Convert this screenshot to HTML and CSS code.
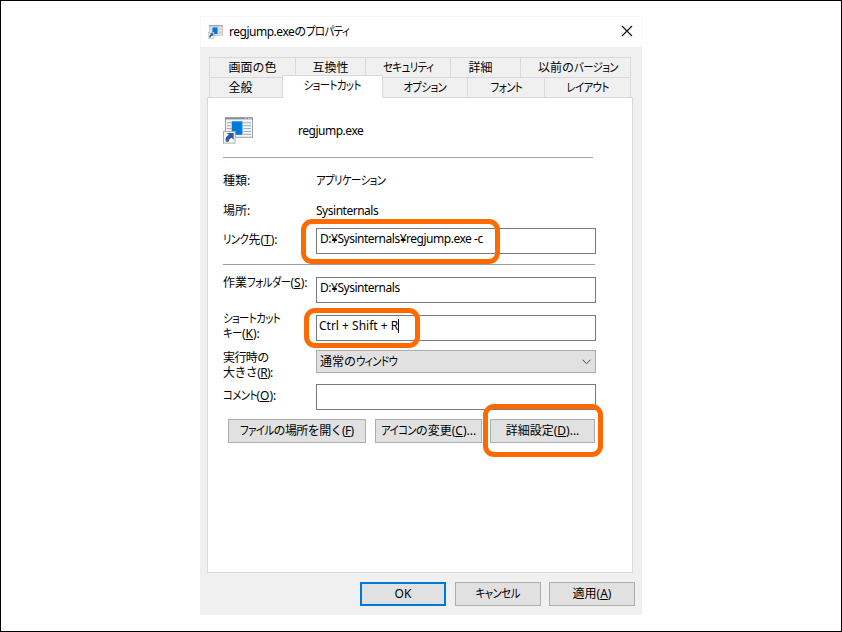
FILE: index.html
```html
<!DOCTYPE html>
<html lang="ja">
<head>
    <meta charset="UTF-8" />
    <title>regjump.exeのプロパティ</title>
    <link rel="stylesheet" href="styles.css">
</head>
<body>
    <svg width="0" height="0" class="defs">
        <symbol id="app" viewBox="0 0 31 29">
            <rect x="2.5" y="1.5" width="28" height="20" fill="#f5f5f5" stroke="#9b9da0"/>
            <path d="M2 2h29" stroke="#85888c" stroke-width="2"/>
            <path d="M23 2h1M26 2h1M28.500 2h1" stroke="#fff"/>
            <path d="M4 6.500h5M4 9.500h4M4 12.500h5M21 6.500h8M21 9.500h8M21 12.500h8M21 15.500h8M21 18.500h8" stroke="#a3a6aa"/>
            <rect x="9" y="5" width="11" height="14" fill="#0078d7"/>
            <path d="M20 5v14" stroke="#6db5ef"/>
            <rect x=".5" y="15.500" width="12" height="12" fill="#fafafa" stroke="#aaa"/>
            <path d="M4 17h7v7l-2-2c-2 1-3 2-3 4H3c-1-3 0-5 3-7z" fill="#2d5b9c"/>
        </symbol>
    </svg>
    <div class="dialog">
        <div class="titlebar">
            <svg class="icon-small"><use href="#app"/></svg>
            <span class="title"><span class="latin">regjump.exe</span>の<span class="kana">プロパティ</span></span>
            <svg class="close" viewBox="0 0 12 12"><path d="M1 1l10 10M11 1L1 11" stroke="#111" stroke-width="1.200"/></svg>
        </div>

        <div class="tabs">
            <div class="tab-row">
                <div class="tab w86">画面の色</div>
                <div class="tab w70">互換性</div>
                <div class="tab w85"><span class="kana mid">セキュリティ</span></div>
                <div class="tab w70 details">詳細</div>
                <div class="tab w110 previous">以前の<span class="kana k6">バージョン</span></div>
            </div>
            <div class="tab-row">
                <div class="tab w73 general">全般</div>
                <div class="tab active"><span class="kana mid">ショートカット</span></div>
                <div class="tab w85"><span class="kana mid">オプション</span></div>
                <div class="tab w77"><span class="kana mid">フォント</span></div>
                <div class="tab w86"><span class="kana mid">レイアウト</span></div>
            </div>
        </div>

        <div class="panel">
            <div class="header">
                <svg class="icon"><use href="#app"/></svg>
                <span class="latin">regjump.exe</span>
            </div>
            <div class="row info first">
                <div class="label">種類:</div>
                <div class="kana">アプリケーション</div>
            </div>
            <div class="row info">
                <div class="label">場所:</div>
                <div class="latin">Sysinternals</div>
            </div>
            <div class="row target">
                <div class="label"><span class="kana k3">リンク</span>先(<u>T</u>):</div>
                <div class="field latin">D:¥Sysinternals¥regjump.exe -c<div class="mark mark-target"></div></div>
            </div>
            <div class="line"></div>
            <div class="row folder">
                <div class="label">作業<span class="kana k5">フォルダー</span>(<u>S</u>):</div>
                <div class="field latin">D:¥Sysinternals</div>
            </div>
            <div class="row key">
                <div class="label"><span class="kana">ショートカット</span><br><span class="kana k2">キー</span>(<u>K</u>):</div>
                <div class="field">Ctrl + Shift + R<span class="caret"></span><div class="mark mark-key"></div></div>
            </div>
            <div class="row size">
                <div class="label tight">実行時の<br>大きさ(<u>R</u>):</div>
                <div class="field select">通常の<span class="kana">ウィンドウ</span>
                    <svg class="arrow" viewBox="0 0 9 6"><path d="M.5 .7l4 4 4-4" fill="none" stroke="#444"/></svg>
                </div>
            </div>
            <div class="row comment">
                <div class="label"><span class="kana k4">コメント</span>(<u>O</u>):</div>
                <div class="field"></div>
            </div>
            <div class="actions">
                <div class="btn open"><span class="tight"><span class="kana k4">ファイル</span>の場所を開く(<u>F</u>)</span></div>
                <div class="btn change"><span><span class="kana k4">アイコン</span>の変更(<u>C</u>)...</span></div>
                <div class="btn advanced"><span>詳細設定(<u>D</u>)...</span><div class="mark mark-advanced"></div></div>
            </div>
        </div>

        <div class="footer">
            <div class="btn ok">OK</div>
            <div class="btn"><span class="kana mid">キャンセル</span></div>
            <div class="btn"><span>適用(<u>A</u>)</span></div>
        </div>
    </div>
</body>
</html>
```
FILE: styles.css
```css
* { box-sizing: border-box; }
body {
    margin: 0;
    height: 632px;
    padding: 15px 0 0 199px;
    border: 1px solid #000;
    background: #fff;
    overflow: hidden;
    color: #000;
    font: 12px/15px "Noto Sans", "Noto Sans CJK JP", sans-serif;
    white-space: nowrap;
}
.defs { position: absolute; }
u { text-underline-offset: 1px; text-decoration-thickness: 1px; }

/* Narrow katakana; k2-k6 take back the space left by the squeeze */
.kana {
    display: inline-block;
    font-feature-settings: "palt";
    letter-spacing: -.6px;
    transform: scaleX(.86);
    transform-origin: left;
}
.kana.mid { transform-origin: center; }
.k2 { margin-right: -3px; }
.k3 { margin-right: -4px; }
.k4 { margin-right: -6px; }
.k5 { margin-right: -7px; }
.k6 { margin-right: -8px; }
.latin { letter-spacing: -.48px; }
.tight { letter-spacing: -.6px; }

.dialog { width: 442px; height: 599px; background: #f0f0f0; }
.titlebar {
    display: flex;
    align-items: center;
    height: 31px;
    padding: 0 8px 2px 7px;
    border: 1px solid #f8f8f8;
    border-bottom: 0;
    background: #fff;
}
.icon-small { width: 15px; height: 14px; margin: 1px 6px 0 0; }
.close { width: 12px; height: 12px; margin-left: auto; }

/* Tabs */
.tabs { padding: 10px 11px 0 9px; }
.tab-row { display: flex; height: 20px; border-left: 1px solid #d9d9d9; }
.tab {
    height: 20px;
    border: 1px solid #d9d9d9;
    border-width: 1px 1px 0 0;
    text-align: center;
    line-height: 20px;
}
.w70 { width: 70px; }
.w73 { width: 73px; }
.w77 { width: 77px; }
.w85 { width: 85px; }
.w86 { width: 86px; }
.w110 { width: 110px; }
.details { padding-right: 10px; }
.previous { padding-left: 4px; }
.general { padding-right: 11px; }
.tab.active {
    position: relative;
    z-index: 1;
    width: 101px;
    height: 23px;
    margin: -2px 0 0 -1px;
    border-left-width: 1px;
    background: #fff;
}

/* Page */
.panel {
    width: 426px;
    height: 476px;
    margin-left: 7px;
    padding-left: 15px;
    border: 1px solid #d9d9d9;
    background: #fff;
}
.header {
    display: flex;
    align-items: center;
    width: 370px;
    height: 60px;
    padding-top: 5px;
    border-bottom: 1px solid #a0a0a0;
}
.icon { width: 30px; height: 29px; margin: 1px 45px 0 0; }
.line { width: 372px; margin-top: 10px; border-top: 1px solid #a0a0a0; }
.row { display: flex; width: 373px; height: 26px; }
.label { width: 93px; flex: none; }
.row.info { height: 20px; margin-top: 10px; line-height: 21px; }
.row.first { margin-top: 12px; }
.target { margin-top: 8px !important; }
.target .label { margin-top: 4px; }
.folder, .key { margin-top: 12px; }
.folder .label { margin-top: -2px; }
.key .label { margin-top: -4px; }
.row.size { height: 23px; margin-top: 9px; }
.comment { margin-top: 11px; }
.comment .label { margin-top: 4px; }
.field {
    position: relative;
    width: 280px;
    height: 100%;
    padding: 2px 3px 0;
    border: 1px solid #7a7a7a;
    background: #fff;
}
.key .field { padding-left: 2px; }
.caret { display: inline-block; width: 1px; height: 14px; background: #000; vertical-align: -3px; }
.field.select { padding-top: 3px; border-color: #adadad; background: #e1e1e1; }
.arrow { position: absolute; right: 4px; top: 8px; width: 9px; height: 6px; }

.actions { display: flex; margin: 9px 0 0 5px; }
.btn {
    position: relative;
    display: flex;
    align-items: center;
    justify-content: center;
    width: 86px;
    height: 24px;
    padding-bottom: 1px;
    border: 1px solid #adadad;
    background: #e1e1e1;
}
.open { width: 138px; margin-right: 9px; }
.change { width: 107px; margin-right: 8px; }
.advanced { width: 105px; }
.footer { display: flex; justify-content: flex-end; gap: 8px; padding: 9px 7px 0 0; }
.ok { margin-right: 1px; border: 2px solid #0078d7; }

/* Highlights */
.mark { position: absolute; z-index: 2; border: 5px solid #ff6a00; border-radius: 11px; }
.mark-target { left: -16px; top: -10px; width: 199px; height: 45px; }
.mark-key { left: -13px; top: -8px; width: 116px; height: 40px; }
.mark-advanced { left: -8px; top: -16px; width: 120px; height: 53px; }
```
